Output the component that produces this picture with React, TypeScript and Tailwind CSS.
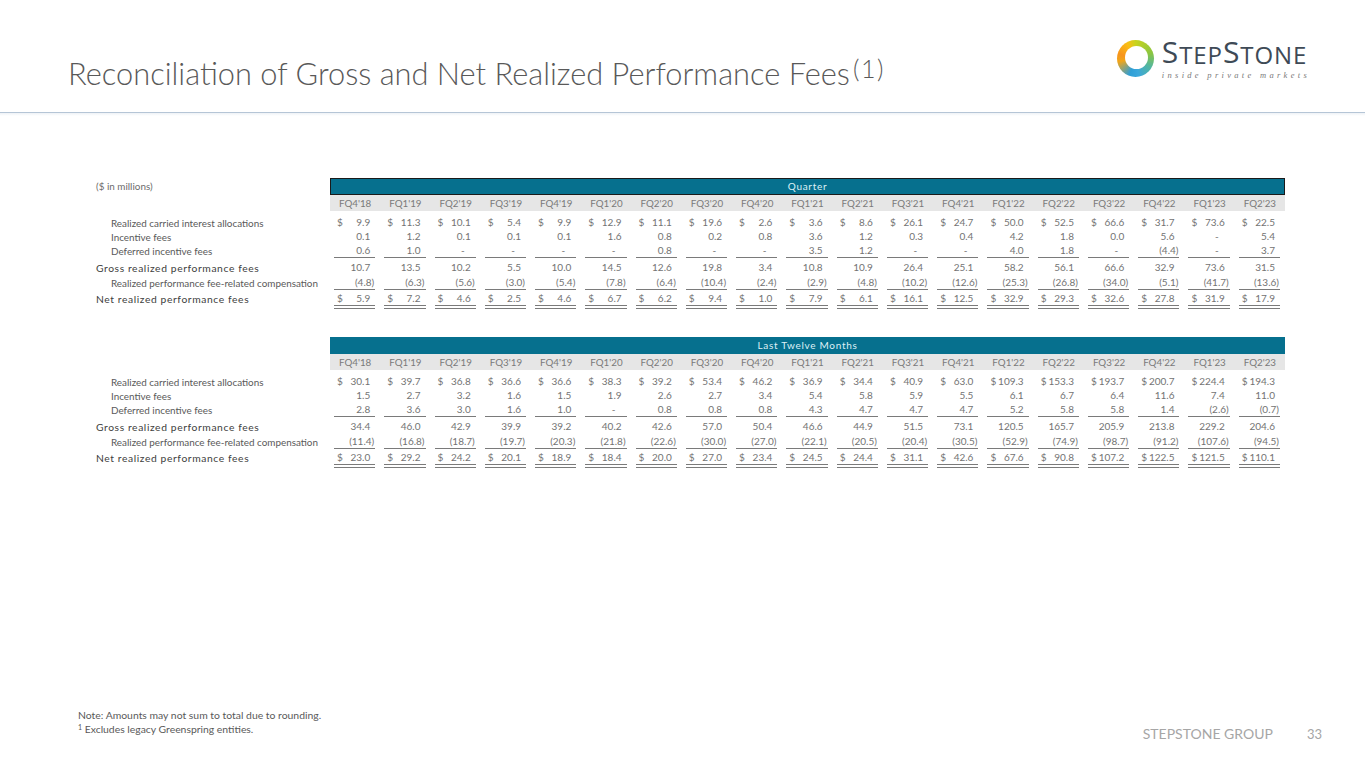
import React from "react";

const quarters = ["FQ4'18","FQ1'19","FQ2'19","FQ3'19","FQ4'19","FQ1'20","FQ2'20","FQ3'20","FQ4'20","FQ1'21","FQ2'21","FQ3'21","FQ4'21","FQ1'22","FQ2'22","FQ3'22","FQ4'22","FQ1'23","FQ2'23"];

type Row = { label: string; vals: string[]; kind: "sub" | "subU" | "gross" | "comp" | "net"; dollar?: boolean };

const q: Row[] = [
  { label: "Realized carried interest allocations", kind: "sub", dollar: true, vals: ["9.9","11.3","10.1","5.4","9.9","12.9","11.1","19.6","2.6","3.6","8.6","26.1","24.7","50.0","52.5","66.6","31.7","73.6","22.5"] },
  { label: "Incentive fees", kind: "sub", vals: ["0.1","1.2","0.1","0.1","0.1","1.6","0.8","0.2","0.8","3.6","1.2","0.3","0.4","4.2","1.8","0.0","5.6","-","5.4"] },
  { label: "Deferred incentive fees", kind: "subU", vals: ["0.6","1.0","-","-","-","-","0.8","-","-","3.5","1.2","-","-","4.0","1.8","-","(4.4)","-","3.7"] },
  { label: "Gross realized performance fees", kind: "gross", vals: ["10.7","13.5","10.2","5.5","10.0","14.5","12.6","19.8","3.4","10.8","10.9","26.4","25.1","58.2","56.1","66.6","32.9","73.6","31.5"] },
  { label: "Realized performance fee-related compensation", kind: "comp", vals: ["(4.8)","(6.3)","(5.6)","(3.0)","(5.4)","(7.8)","(6.4)","(10.4)","(2.4)","(2.9)","(4.8)","(10.2)","(12.6)","(25.3)","(26.8)","(34.0)","(5.1)","(41.7)","(13.6)"] },
  { label: "Net realized performance fees", kind: "net", dollar: true, vals: ["5.9","7.2","4.6","2.5","4.6","6.7","6.2","9.4","1.0","7.9","6.1","16.1","12.5","32.9","29.3","32.6","27.8","31.9","17.9"] },
];

const ltm: Row[] = [
  { label: "Realized carried interest allocations", kind: "sub", dollar: true, vals: ["30.1","39.7","36.8","36.6","36.6","38.3","39.2","53.4","46.2","36.9","34.4","40.9","63.0","109.3","153.3","193.7","200.7","224.4","194.3"] },
  { label: "Incentive fees", kind: "sub", vals: ["1.5","2.7","3.2","1.6","1.5","1.9","2.6","2.7","3.4","5.4","5.8","5.9","5.5","6.1","6.7","6.4","11.6","7.4","11.0"] },
  { label: "Deferred incentive fees", kind: "subU", vals: ["2.8","3.6","3.0","1.6","1.0","-","0.8","0.8","0.8","4.3","4.7","4.7","4.7","5.2","5.8","5.8","1.4","(2.6)","(0.7)"] },
  { label: "Gross realized performance fees", kind: "gross", vals: ["34.4","46.0","42.9","39.9","39.2","40.2","42.6","57.0","50.4","46.6","44.9","51.5","73.1","120.5","165.7","205.9","213.8","229.2","204.6"] },
  { label: "Realized performance fee-related compensation", kind: "comp", vals: ["(11.4)","(16.8)","(18.7)","(19.7)","(20.3)","(21.8)","(22.6)","(30.0)","(27.0)","(22.1)","(20.5)","(20.4)","(30.5)","(52.9)","(74.9)","(98.7)","(91.2)","(107.6)","(94.5)"] },
  { label: "Net realized performance fees", kind: "net", dollar: true, vals: ["23.0","29.2","24.2","20.1","18.9","18.4","20.0","27.0","23.4","24.5","24.4","31.1","42.6","67.6","90.8","107.2","122.5","121.5","110.1"] },
];

const grid = "grid grid-cols-[234px_repeat(19,minmax(0,1fr))]";

function Value({ v }: { v: string }) {
  if (v === "-") return <span className="pr-[10px]">-</span>;
  const neg = v.startsWith("(");
  return <span className={neg ? "" : "pr-[4px]"}>{v}</span>;
}

function DataRow({ r }: { r: Row }) {
  const isBold = r.kind === "gross" || r.kind === "net";
  const rowCls =
    r.kind === "gross" ? "h-[18px] pt-[3px]" :
    r.kind === "comp" ? "h-[13px]" :
    r.kind === "net" ? "h-[19px] pt-[3px]" :
    "h-[14px]";
  const underline =
    r.kind === "subU" || r.kind === "comp" ? "border-b border-[#7a7a7a]" :
    r.kind === "net" ? "border-b-[4px] border-double border-[#7a7a7a]" : "";
  return (
    <div className={`${grid} ${rowCls}`}>
      <div className={`${isBold ? "pl-0 text-[10.3px] tracking-[0.6px] text-[#404040]" : "pl-[15px] text-[9.9px] text-[#595959]"} leading-[14px] whitespace-nowrap`}>
        {r.label}
      </div>
      {r.vals.map((v, i) => (
        <div key={i} className={`ml-[4px] mr-[5px] ${underline}`}>
          <div className="flex justify-between pl-[3px] pr-[1px] leading-[13px] text-[10px] text-[#737373]">
            <span>{r.dollar ? "$" : ""}</span>
            <Value v={v} />
          </div>
        </div>
      ))}
    </div>
  );
}

function Table({ title, rows, bordered, showUnits }: { title: string; rows: Row[]; bordered?: boolean; showUnits?: boolean }) {
  return (
    <div className="w-[1189px]">
      <div className={`${grid} h-[17px]`}>
        <div className="text-[9.9px] text-[#6b6b6b] leading-[17px]">{showUnits ? "($ in millions)" : ""}</div>
        <div className={`col-span-19 bg-[#06708e] flex items-center justify-center text-[10px] tracking-[0.7px] text-[#dff0f6] ${bordered ? "border border-[#1a1a1a]" : ""}`}>
          {title}
        </div>
      </div>
      <div className={`${grid} h-[16px]`}>
        <div />
        {quarters.map((h) => (
          <div key={h} className="bg-[#e6e6e6] text-center text-[9.8px] text-[#7a7a7a] leading-[16px]">{h}</div>
        ))}
      </div>
      <div className="h-[5px]" />
      {rows.map((r) => <DataRow key={r.label} r={r} />)}
    </div>
  );
}

function Logo() {
  return (
    <div className="flex items-center gap-[8px]">
      <div className="w-[37px] h-[37px] rounded-full bg-[conic-gradient(from_0deg,#c8d31e,#8cc63f_70deg,#52b6a0_120deg,#3ba7dc_170deg,#2f9fd6_200deg,#f0a51a_260deg,#f7941d_285deg,#fbbd14_330deg,#c8d31e)] flex items-center justify-center">
        <div className="w-[23px] h-[23px] rounded-full bg-white ml-[3px] mb-[2px]" />
      </div>
      <div className="flex flex-col items-start">
        <div className="font-['Open_Sans',sans-serif] text-[#3e4a56] leading-none tracking-[0.9px] flex items-end">
          <span className="text-[30px]">S</span>
          <span className="text-[24px]">TEP</span>
          <span className="text-[30px]">S</span>
          <span className="text-[24px]">TONE</span>
        </div>
        <div className="font-['Liberation_Serif',serif] italic text-[8.5px] text-[#7a7a7a] tracking-[3.3px] leading-none mt-[4px]">inside private markets</div>
      </div>
    </div>
  );
}

export default function App() {
  return (
    <div className="w-[1365px] h-[768px] bg-white flex flex-col overflow-hidden font-['Lato','Open_Sans',sans-serif]">
      <div className="h-[112px] flex justify-between items-start">
        <h1 className="ml-[68px] mt-[55px] h-[38px] text-[30.8px] font-light text-[#595959] leading-[38px] whitespace-nowrap">
          Reconciliation of Gross and Net Realized Performance Fees<span className="text-[25px] leading-none tracking-[1.5px] ml-[3px] align-[7px]">(1)</span>
        </h1>
        <div className="mt-[37px] mr-[55px]">
          <Logo />
        </div>
      </div>
      <div className="h-px bg-[#b5c5d6]" />
      <div className="h-[3px] bg-gradient-to-b from-[#eef2f6] to-white" />
      <div className="ml-[96px] mt-[62px] flex flex-col gap-[29px]">
        <Table title="Quarter" rows={q} bordered showUnits />
        <Table title="Last Twelve Months" rows={ltm} />
      </div>
      <div className="mt-auto mb-[26px] flex justify-between items-end">
        <div className="ml-[78px] mb-[6px] text-[10.4px] text-[#595959] leading-[14px]">
          <div>Note: Amounts may not sum to total due to rounding.</div>
          <div><sup className="text-[7px]">1</sup> Excludes legacy Greenspring entities.</div>
        </div>
        <div className="mr-[43px] flex items-end gap-[34px] text-[#a6a6a6]">
          <span className="text-[14px] leading-[16px]">STEPSTONE GROUP</span>
          <span className="text-[13px] leading-[16px]">33</span>
        </div>
      </div>
    </div>
  );
}
